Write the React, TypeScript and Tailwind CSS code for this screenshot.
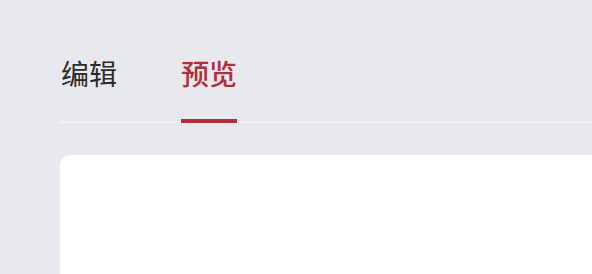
export default function App() {
  return (
    <div
      className="h-[274px] w-[592px] overflow-hidden bg-[#e8e9ee]"
      style={{ fontFamily: '"Noto Sans CJK SC", "Noto Sans", sans-serif' }}
    >
      <div className="ml-[60px] w-[600px] pt-[59px]">
        <div className="flex gap-[64px] border-b-2 border-[#f3f3f5] pl-[1px]">
          <button className="relative pb-[34px] text-[28px] leading-[28px] text-[#2b2b2b]">
            编辑
          </button>
          <button className="relative pb-[34px] text-[28px] leading-[28px] font-medium text-[#b32e3a]">
            预览
            <span className="absolute left-0 right-0 -bottom-[2px] h-[4px] bg-[#b32e3a]" />
          </button>
        </div>
        <div className="mt-[32px] h-[200px] rounded-[10px] bg-white" />
      </div>
    </div>
  );
}
